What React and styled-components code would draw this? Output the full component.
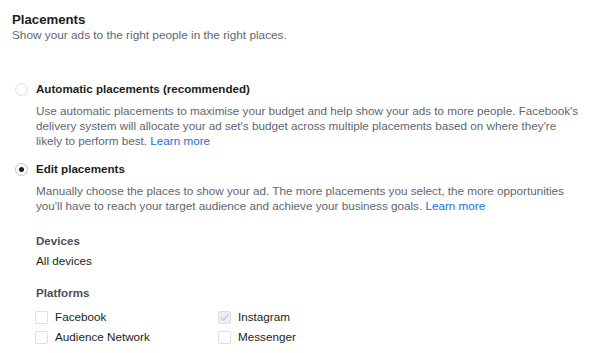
import React from "react";
import styled, { createGlobalStyle } from "styled-components";

const Global = createGlobalStyle`
  html, body { margin: 0; padding: 0; background: #fff; }
  body { font-family: "Liberation Sans", Arial, sans-serif; color: #1c1e21; -webkit-font-smoothing: antialiased; }
`;

const Page = styled.div`
  width: 600px;
  height: 353px;
  overflow: hidden;
  padding: 12px 0 0 12px;
  box-sizing: border-box;
`;

const Title = styled.h2`
  margin: 0;
  font-size: 13.2px;
  font-weight: bold;
  line-height: 16px;
  color: #1c1e21;
`;

const Subtitle = styled.p`
  margin: 0;
  font-size: 11.8px;
  line-height: 14px;
  color: #606770;
`;

const Options = styled.div`
  margin-top: 39px;
  display: flex;
  flex-direction: column;
  gap: 13px;
`;

const Option = styled.div`
  display: grid;
  grid-template-columns: 24px 1fr;
  row-gap: 6px;
`;

const Radio = styled.span`
  width: 13px;
  height: 13px;
  margin: 2px 0 0 3px;
  border-radius: 50%;
  border: 1px solid ${(p) => (p.$checked ? "#bec3c9" : "#dddfe2")};
  box-sizing: border-box;
  display: flex;
  align-items: center;
  justify-content: center;
  &::after {
    content: "";
    width: 5px;
    height: 5px;
    border-radius: 50%;
    background: ${(p) => (p.$checked ? "#1c1e21" : "transparent")};
  }
`;

const OptionLabel = styled.div`
  font-size: 11.6px;
  font-weight: bold;
  line-height: 16px;
  color: #1c1e21;
`;

const Desc = styled.p`
  grid-column: 2;
  margin: 0;
  font-size: 11.7px;
  line-height: 15px;
  color: #606770;
  white-space: nowrap;
`;

const Link = styled.a`
  color: #216fdb;
  text-decoration: none;
`;

const Sub = styled.div`
  grid-column: 2;
  margin-top: 14px;
  display: flex;
  flex-direction: column;
`;

const SectionLabel = styled.div`
  font-size: 11.6px;
  font-weight: bold;
  line-height: 16px;
  color: #4b4f56;
`;

const SectionValue = styled.div`
  margin-top: 4px;
  font-size: 11.7px;
  line-height: 16px;
  color: #1c1e21;
`;

const Section = styled.div`
  margin-bottom: 16px;
`;

const Grid = styled.div`
  margin: 8px 0 0 -1px;
  display: grid;
  grid-template-columns: 183px 1fr;
  row-gap: 4px;
`;

const CheckRow = styled.label`
  display: flex;
  align-items: center;
  gap: 7px;
  font-size: 11.7px;
  line-height: 16px;
  color: #1c1e21;
`;

const Box = styled.span`
  width: 13px;
  height: 13px;
  box-sizing: border-box;
  border: 1px solid #dddfe2;
  border-radius: 2px;
  background: ${(p) => (p.$disabled ? "#ebedf0" : "#fff")};
  display: flex;
  align-items: center;
  justify-content: center;
`;

function Check({ label, checked, disabled }) {
  return (
    <CheckRow>
      <Box $disabled={disabled}>
        {checked && (
          <svg width="11" height="11" viewBox="0 0 11 11">
            <path d="M1.8 5.6 L4.4 8.2 L9.4 2.4" fill="none" stroke="#bec3c9" strokeWidth="1.2" />
          </svg>
        )}
      </Box>
      {label}
    </CheckRow>
  );
}

export default function App() {
  return (
    <Page>
      <Global />
      <Title>Placements</Title>
      <Subtitle>Show your ads to the right people in the right places.</Subtitle>
      <Options>
        <Option>
          <Radio />
          <OptionLabel>Automatic placements (recommended)</OptionLabel>
          <Desc>
            Use automatic placements to maximise your budget and help show your ads to more people. Facebook's
            <br />
            delivery system will allocate your ad set's budget across multiple placements based on where they're
            <br />
            likely to perform best. <Link href="#">Learn more</Link>
          </Desc>
        </Option>
        <Option>
          <Radio $checked />
          <OptionLabel>Edit placements</OptionLabel>
          <Desc>
            Manually choose the places to show your ad. The more placements you select, the more opportunities
            <br />
            you'll have to reach your target audience and achieve your business goals. <Link href="#">Learn more</Link>
          </Desc>
          <Sub>
            <Section>
              <SectionLabel>Devices</SectionLabel>
              <SectionValue>All devices</SectionValue>
            </Section>
            <SectionLabel>Platforms</SectionLabel>
            <Grid>
              <Check label="Facebook" />
              <Check label="Instagram" checked disabled />
              <Check label="Audience Network" />
              <Check label="Messenger" />
            </Grid>
          </Sub>
        </Option>
      </Options>
    </Page>
  );
}
